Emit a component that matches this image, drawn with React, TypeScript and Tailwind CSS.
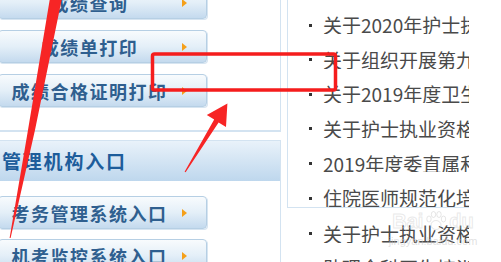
import React from 'react';

const news = [
  '关于2020年度卫生专业技术资格考试',
  '关于2020年护士执业资格考试成绩',
  '关于组织开展第九批省级重点专科',
  '关于2019年度卫生专业技术资格',
  '关于护士执业资格考试合格证明',
  '2019年度委直属和省属单位',
  '住院医师规范化培训结业考核',
];

const moreNews = ['关于护士执业资格考试报名', '助理全科医生培训结业考核'];

function MenuButton({ label }: { label: string }) {
  return (
    <div className="-ml-[2px] w-[209px] h-[33px] shrink-0 flex items-center rounded-[4px] border border-[#b6cfe4] bg-linear-to-b from-[#f8fbfd] via-[#e4eff8] to-[#c4daee] shadow-[1px_1px_0_#d7e5f1]">
      <span className="w-[181px] text-center text-[18px] leading-[20px] font-bold tracking-[1.5px] text-[#2f5f8f] whitespace-nowrap">
        {label}
      </span>
      <span className="ml-[2px] w-0 h-0 border-y-[4px] border-y-transparent border-l-[5px] border-l-[#f5a01a]" />
    </div>
  );
}

function NewsRow({ text }: { text: string }) {
  return (
    <div className="h-[34.6px] shrink-0 pt-[17px] pl-[21px] flex items-center gap-[11px] whitespace-nowrap overflow-hidden">
      <span className="w-[3px] h-[3px] shrink-0 bg-[#333]" />
      <span className="text-[19px] leading-[20px] text-[#4a4a4a]">{text}</span>
    </div>
  );
}

export default function App() {
  return (
    <div className="w-[501px] h-[262px] relative overflow-hidden bg-white flex font-['Noto_Sans_CJK_SC',sans-serif]">
      {/* left column */}
      <div className="w-[281px] shrink-0 flex flex-col">
        <div className="-mt-[40px] h-[172px] shrink-0 flex flex-col gap-[11px] pt-[26px] border-r border-b-2 border-[#d3e3f1]">
          <MenuButton label="成绩查询" />
          <MenuButton label="成绩单打印" />
          <MenuButton label="成绩合格证明打印" />
        </div>
        <div className="mt-[8px] flex-1 flex flex-col border-t border-r border-[#d3e3f1]">
          <div className="h-[40px] shrink-0 flex items-center pl-[2px] bg-linear-to-b from-[#e9f2fa] to-[#bed7ed]">
            <span className="text-[19px] font-bold tracking-[1.8px] text-[#1d5d9b]">管理机构入口</span>
          </div>
          <div className="flex flex-col gap-[10px] pt-[15px]">
            <MenuButton label="考务管理系统入口" />
            <MenuButton label="机考监控系统入口" />
          </div>
        </div>
      </div>

      {/* right column */}
      <div className="ml-[6px] w-[182px] shrink-0 flex flex-col overflow-hidden">
        <div className="-mt-[35.2px] shrink-0 flex flex-col border-l border-b border-[#d3e3f1]">
          {news.map((t) => (
            <NewsRow key={t} text={t} />
          ))}
        </div>
        <div className="pl-[1px] flex flex-col">
          {moreNews.map((t) => (
            <NewsRow key={t} text={t} />
          ))}
        </div>
      </div>

      {/* watermark */}
      <div className="absolute left-[383px] top-[210px] w-[100px] flex flex-col items-center pointer-events-none">
        <div className="flex items-end gap-[2px] text-[20px] leading-[22px] font-bold text-transparent [-webkit-text-stroke:1px_rgba(200,200,200,0.4)] font-['Liberation_Sans',sans-serif]">
          <span>Bai</span>
          <svg width="22" height="22" viewBox="0 0 22 22" fill="none" stroke="rgba(200,200,200,0.45)" strokeWidth="1">
            <ellipse cx="11" cy="15" rx="5" ry="4.5" />
            <ellipse cx="4" cy="9" rx="2.2" ry="3" />
            <ellipse cx="8.5" cy="4.5" rx="2.2" ry="3" />
            <ellipse cx="14" cy="4.5" rx="2.2" ry="3" />
            <ellipse cx="18.5" cy="9" rx="2.2" ry="3" />
          </svg>
          <span>du</span>
        </div>
        <span className="mt-[3px] text-[11px] leading-[12px] text-[rgba(195,195,195,0.5)] font-['Liberation_Sans',sans-serif]">
          jingyan.baidu.com
        </span>
      </div>

      {/* annotation overlay */}
      <svg className="absolute inset-0 pointer-events-none" width="501" height="262" viewBox="0 0 501 262">
        <polygon points="50,-2 62,-2 35,130 10.6,238 9.6,238 28,130" fill="#f72525" />
        <polygon
          points="184.6,171.8 214.2,119.6 206.8,115 227.4,103.6 226,127 218.6,122.4 185.6,172.2"
          fill="#f72525"
        />
        <rect x="152.5" y="54" width="183" height="36" rx="2" fill="none" stroke="#f51d1d" strokeWidth="3.5" />
      </svg>
    </div>
  );
}
